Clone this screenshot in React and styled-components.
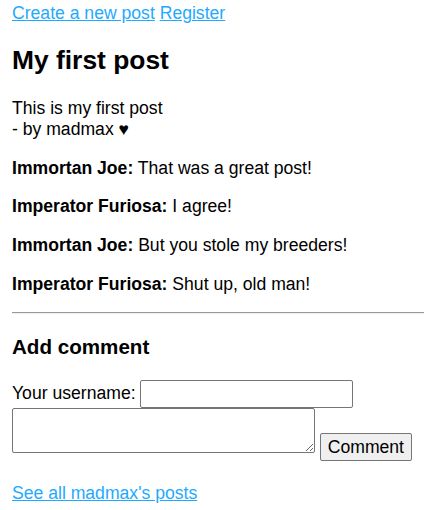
import React from 'react'
import styled, { createGlobalStyle } from 'styled-components'

const GlobalStyle = createGlobalStyle`
  body {
    margin: 0;
    background: #fff;
    color: #000;
    font-family: "Liberation Sans", Arial, sans-serif;
    font-size: 17.6px;
  }
`

const Page = styled.div`
  padding: 3px 0 0 12px;
`

const Nav = styled.nav`
  line-height: 20px;
`

const Link = styled.a`
  color: #1eaaff;
  text-decoration: underline;
  cursor: pointer;
`

const Title = styled.h2`
  font-size: 26.4px;
  font-weight: bold;
  margin: 22px 0 22px;
`

const PostBody = styled.p`
  margin: 0 0 17.6px;
`

const CommentList = styled.div`
  display: flex;
  flex-direction: column;
  gap: 17.8px;
`

const Comment = styled.p`
  margin: 0;
`

const Divider = styled.hr`
  border: none;
  border-top: 1px solid #9a9a9a;
  border-bottom: 1px solid #eee;
  margin: 17.5px 0 0;
`

const SubTitle = styled.h3`
  font-size: 20.6px;
  font-weight: bold;
  margin: 20.6px 0 20.6px;
`

const Form = styled.form`
  margin: 0;
`

const TextInput = styled.input`
  font-family: inherit;
  font-size: 17.6px;
  width: 213px;
  height: 28px;
  box-sizing: border-box;
  border: 1px solid #767676;
  border-radius: 2px;
  padding: 1px 2px;
  margin: 0;
`

const TextArea = styled.textarea`
  font-family: "Liberation Mono", monospace;
  font-size: 14px;
  width: 303px;
  height: 45px;
  box-sizing: border-box;
  border: 1px solid #767676;
  border-radius: 2px;
  margin: 0;
  vertical-align: baseline;
`

const Button = styled.button`
  font-family: inherit;
  font-size: 17.6px;
  width: 92px;
  height: 28px;
  box-sizing: border-box;
  background: #efefef;
  border: 1px solid #767676;
  border-radius: 2px;
  color: #000;
  margin: 0;
  padding: 1px 6px;
`

const Footer = styled.p`
  margin: 22px 0 0;
`

const comments = [
  { author: 'Immortan Joe', text: 'That was a great post!' },
  { author: 'Imperator Furiosa', text: 'I agree!' },
  { author: 'Immortan Joe', text: 'But you stole my breeders!' },
  { author: 'Imperator Furiosa', text: 'Shut up, old man!' },
]

export default function App() {
  return (
    <Page>
      <GlobalStyle />
      <Nav>
        <Link>Create a new post</Link> <Link>Register</Link>
      </Nav>
      <Title>My first post</Title>
      <PostBody>
        This is my first post
        <br />- by madmax ♥
      </PostBody>
      <CommentList>
        {comments.map((c, i) => (
          <Comment key={i}>
            <b>{c.author}:</b> {c.text}
          </Comment>
        ))}
      </CommentList>
      <Divider />
      <SubTitle>Add comment</SubTitle>
      <Form onSubmit={e => e.preventDefault()}>
        <div>
          <label>
            Your username: <TextInput type="text" />
          </label>
        </div>
        <div>
          <TextArea /> <Button type="submit">Comment</Button>
        </div>
      </Form>
      <Footer>
        <Link>See all madmax's posts</Link>
      </Footer>
    </Page>
  )
}
